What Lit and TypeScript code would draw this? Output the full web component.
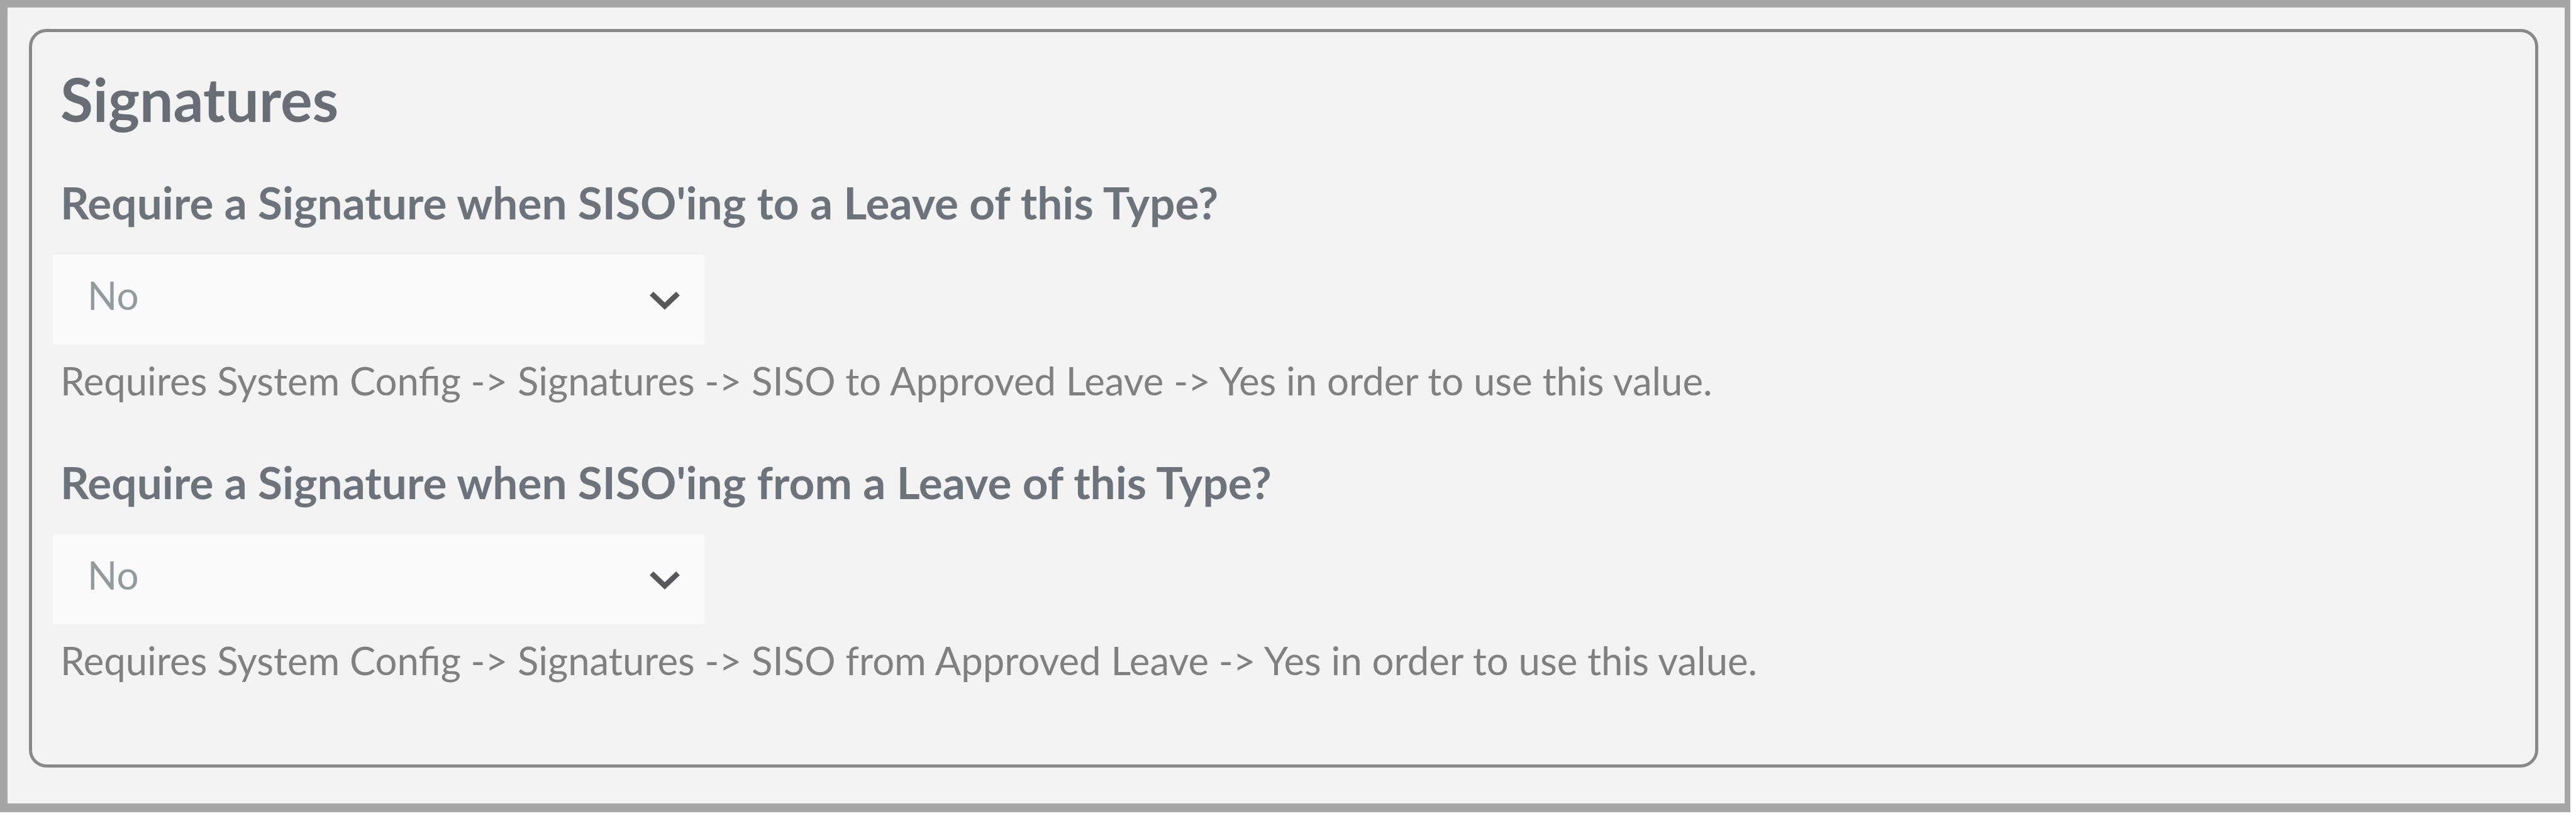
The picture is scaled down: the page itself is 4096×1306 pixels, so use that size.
import { html, css, LitElement } from 'lit';
import { customElement, property } from 'lit/decorators.js';

export interface signatureField {
  label: string,
  value: string,
  hint: string,
}

const FIELDS: signatureField[] = [
  {
    label: "Require a Signature when SISO'ing to a Leave of this Type?",
    value: 'No',
    hint: 'Requires System Config -> Signatures -> SISO to Approved Leave -> Yes in order to use this value.',
  },
  {
    label: "Require a Signature when SISO'ing from a Leave of this Type?",
    value: 'No',
    hint: 'Requires System Config -> Signatures -> SISO from Approved Leave -> Yes in order to use this value.',
  },
];

@customElement('select-field')
export class SelectField extends LitElement {
  static styles = css`
    :host {
      display: flex;
      flex-direction: column;
      align-items: flex-start;
      white-space: nowrap;
    }

    .label {
      color: #6c737b;
      font-size: 71.15px;
      font-weight: 700;
      line-height: 84px;
    }

    .select {
      align-items: center;
      background-color: #fafafa;
      border-radius: 4px;
      box-sizing: border-box;
      display: flex;
      height: 143px;
      justify-content: space-between;
      margin: 41px 0 21px -12px;
      padding: 0 36px 0 55px;
      width: 1036px;
    }

    .value {
      color: #929a9b;
      font-size: 62px;
      line-height: 72px;
      padding-bottom: 16px;
    }

    .chevron {
      fill: none;
      height: 34px;
      stroke: #58585a;
      stroke-width: 8.5;
      width: 54px;
    }

    .hint {
      color: #808080;
      font-size: 61.68px;
      line-height: 72px;
    }
  `;

  @property() label = '';

  @property() value = '';

  @property() hint = '';

  render() {
    return html`
      <div class="label">${this.label}</div>
      <div class="select" role="combobox" aria-label=${this.label} tabindex="0">
        <span class="value">${this.value}</span>
        <svg class="chevron" viewBox="0 0 54 34"><path d="M6 7 L27 27 L48 7" /></svg>
      </div>
      <div class="hint">${this.hint}</div>
    `;
  }
}

@customElement('app-root')
export class AppRoot extends LitElement {
  static styles = css`
    :host {
      background-color: #fff;
      box-sizing: border-box;
      display: block;
      font-family: Lato, sans-serif;
      height: 1306px;
      overflow: hidden;
      padding: 0 9px 14px 0;
      width: 4096px;
    }

    .frame {
      background-color: #f3f3f3;
      border-color: #a6a6a6;
      border-style: solid;
      border-width: 12px 9px 14px 12px;
      box-sizing: border-box;
      display: flex;
      height: 100%;
      padding: 34px 42px 57px 34px;
    }

    .card {
      border: 5px solid #898989;
      border-radius: 28px;
      box-sizing: border-box;
      flex: 1;
      padding: 56px 45px 0;
    }

    .title {
      color: #686d76;
      font-size: 94.9px;
      font-weight: 700;
      line-height: 100px;
      margin: 0 0 73px;
    }

    .fields {
      display: flex;
      flex-direction: column;
      gap: 84.4px;
    }
  `;

  render() {
    return html`
      <div class="frame">
        <section class="card">
          <h2 class="title">Signatures</h2>
          <div class="fields">
            ${FIELDS.map((f) => html`
              <select-field .label=${f.label} .value=${f.value} .hint=${f.hint}></select-field>
            `)}
          </div>
        </section>
      </div>
    `;
  }
}
